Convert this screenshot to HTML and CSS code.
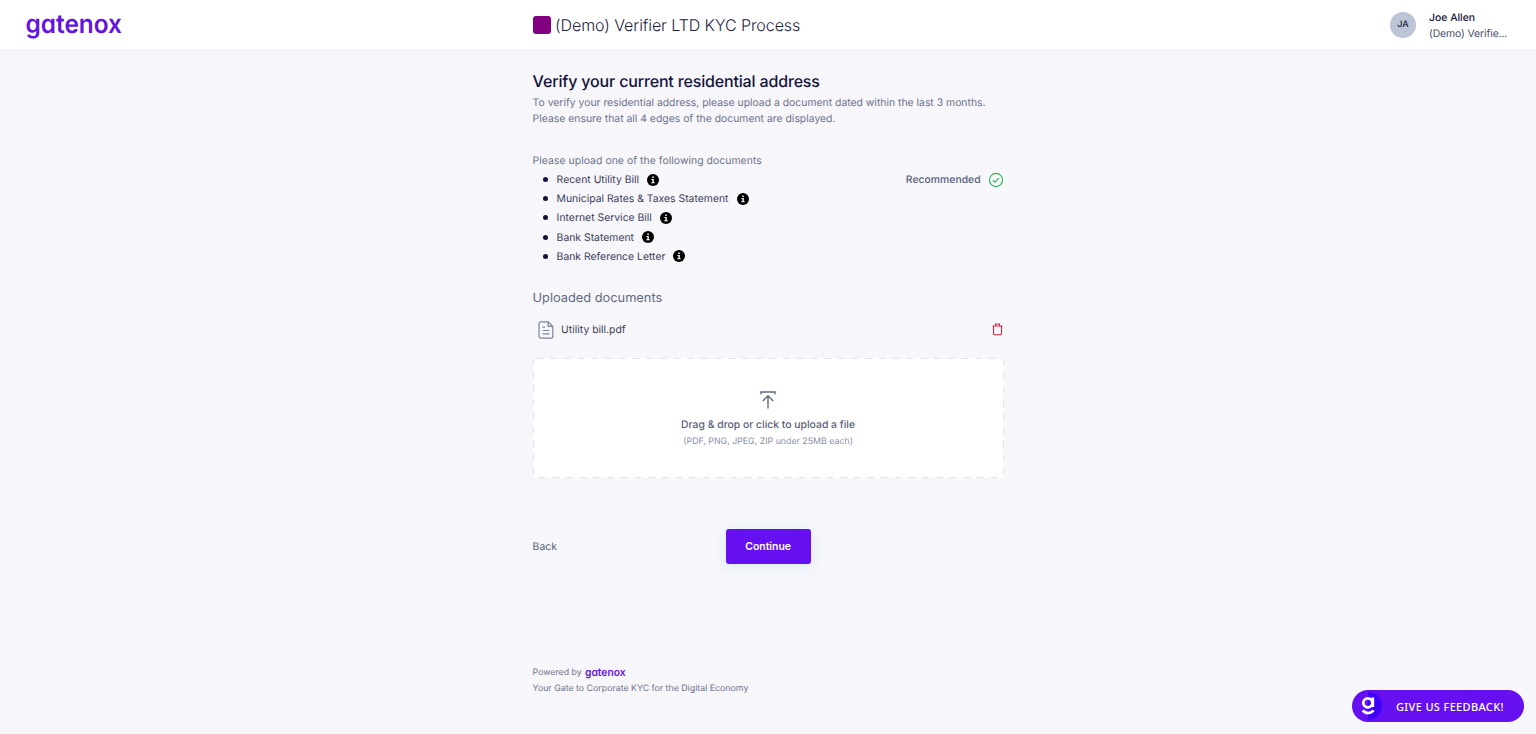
FILE: index.html
```html
<!DOCTYPE html>
<html lang="en">
<head>
<meta charset="utf-8">
<title>Verify your current residential address</title>
<link rel="stylesheet" href="styles.css">
</head>
<body>
<svg width="0" height="0" class="defs"><defs>
<symbol id="info" viewBox="0 0 12 12"><circle cx="6" cy="6" r="6" fill="#000"/><path d="M5.3 2.6h1.5v1.3H5.3zM4.5 5h2.3v3.3h.9v.9H4.3v-.9h1.1V5.9h-.9z" fill="#fff"/></symbol>
</defs></svg>
<header class="header">
  <div class="header-left"><svg class="logo" width="98" height="44" viewBox="0 0 98 44"><text class="wordmark" x=".5" y="29.500" font-size="26" textLength="96.500" lengthAdjust="spacingAndGlyphs">gatenox</text></svg></div>
  <div class="process"><span class="swatch"></span><span class="process-name">(Demo) Verifier LTD KYC Process</span></div>
  <div class="user"><span class="avatar">JA</span><div class="user-info"><div class="user-name">Joe Allen</div><div class="user-org">(Demo) Verifie...</div></div></div>
</header>
<main class="content">
  <h1 class="title">Verify your current residential address</h1>
  <p class="intro">To verify your residential address, please upload a document dated within the last 3 months.<br>Please ensure that all 4 edges of the document are displayed.</p>
  <p class="lead">Please upload one of the following documents</p>
  <ul class="docs">
    <li class="doc"><span>Recent Utility Bill</span><svg class="info"><use href="#info"/></svg>
      <span class="recommended">Recommended</span><svg class="check" width="16" height="16" viewBox="0 0 16 16"><circle cx="8" cy="8" r="6.6"/><path d="M5 8.2l2 1.9 4-4"/></svg></li>
    <li class="doc"><span>Municipal Rates &amp; Taxes Statement</span><svg class="info"><use href="#info"/></svg></li>
    <li class="doc"><span>Internet Service Bill</span><svg class="info"><use href="#info"/></svg></li>
    <li class="doc"><span>Bank Statement</span><svg class="info"><use href="#info"/></svg></li>
    <li class="doc"><span>Bank Reference Letter</span><svg class="info"><use href="#info"/></svg></li>
  </ul>
  <h2 class="subtitle">Uploaded documents</h2>
  <div class="file">
    <svg class="file-icon" width="16" height="18" viewBox="0 0 16 18"><path d="M3 .8h7.2l4.6 4.6v9.8a2 2 0 0 1-2 2H3a2 2 0 0 1-2-2V2.800a2 2 0 0 1 2-2zM10.200.8v4.600h4.600M4.500 6.200h2.500M4.500 9.500h7M4.500 12.800h7"/></svg>
    <span class="file-name">Utility bill.pdf</span>
    <svg class="trash" width="11" height="13" viewBox="0 0 11 13"><path d="M.5 3h10M3.500 2.800V1h4v1.800M1.500 3v7.800a1 1 0 0 0 1 1h6a1 1 0 0 0 1-1V3"/></svg>
  </div>
  <div class="drop">
    <svg class="border" width="471" height="120"><rect x=".5" y=".5" width="470" height="119" rx="3"/></svg>
    <svg class="upload" width="16" height="18" viewBox="0 0 16 18"><path d="M1 3.200V1h14v2.200M8 17.500V4.800M2.800 10L8 4.800l5.200 5.200"/></svg>
    <div class="drop-main">Drag &amp; drop or click to upload a file</div>
    <div class="drop-note">(PDF, PNG, JPEG, ZIP under 25MB each)</div>
  </div>
  <div class="actions"><a class="back">Back</a><button class="continue">Continue</button></div>
  <footer class="footer">
    <div class="powered"><span>Powered by</span><svg width="42" height="16" viewBox="0 0 42 16"><text class="wordmark" x="0" y="11" font-size="11" textLength="40.500" lengthAdjust="spacingAndGlyphs">gatenox</text></svg></div>
    <div class="tagline">Your Gate to Corporate KYC for the Digital Economy</div>
  </footer>
</main>
<button class="feedback"><svg width="32" height="32" viewBox="0 0 32 32"><circle cx="16" cy="16" r="14" fill="#3f00f5"/><path d="M16 2a14 14 0 0 0 0 28z" fill="#6610f2"/><g fill="none" stroke="#fff" stroke-width="2.700"><circle cx="15.800" cy="12.800" r="4.500"/><path d="M20.800 7.500v9.500M10.600 20.500q5.200 5.200 11 0"/></g></svg><span>GIVE US FEEDBACK!</span></button>
</body>
</html>
```
FILE: styles.css
```css
* { box-sizing: border-box; }
body { margin: 0; height: 734px; overflow: hidden; background: #f6f6fb; color: #4a4e69; font-family: Inter, "Liberation Sans", sans-serif; font-size: 10.4px; text-rendering: geometricPrecision; }
h1, h2, p, ul { margin: 0; padding: 0; font-weight: 400; }
button { border: 0; font-family: inherit; }
svg { display: block; flex: none; }
.defs { position: absolute; }
.header { height: 51px; padding: 0 28px 0 25px; display: grid; grid-template-columns: 507.500px 472px 1fr; align-items: center; background: #fff; border-bottom: 1px solid #ebebef; }
.logo { overflow: visible; }
.wordmark { fill: #6514e0; font-family: Inter, sans-serif; font-weight: 600; font-feature-settings: "cv11"; }
.process { display: flex; align-items: center; gap: 4.500px; }
.swatch { width: 18px; height: 18px; border-radius: 3px; background: #800080; }
.process-name { font-size: 16px; line-height: 24px; font-weight: 300; color: #24243f; letter-spacing: -.07px; white-space: nowrap; }
.user { display: flex; align-items: center; justify-content: flex-end; gap: 13px; padding-top: 1px; }
.avatar { width: 26px; height: 26px; margin-top: -1px; border-radius: 50%; background: #bdc4d6; color: #1c1c3c; font-size: 9px; font-weight: 500; line-height: 26px; text-align: center; }
.user-info { width: 79px; line-height: 16px; white-space: nowrap; }
.user-name { font-weight: 500; color: #14143a; }
.user-org { letter-spacing: -.1px; }
.content { width: 471px; margin: 0 0 0 532.600px; }
.title { padding-top: 18px; font-size: 16px; line-height: 24px; font-weight: 500; letter-spacing: -.16px; color: #12123a; white-space: nowrap; }
.intro { padding-top: 2px; line-height: 16px; color: #6c7489; white-space: nowrap; }
.lead { margin-top: 24px; line-height: 19px; letter-spacing: .05px; color: #6c7489; }
.docs { list-style: none; padding-left: 24px; }
.doc { display: flex; align-items: center; height: 19.200px; color: #3c4058; }
.doc::before { content: ""; width: 5px; height: 5px; margin: 0 9px 0 -14px; border-radius: 50%; background: #12123a; }
.info { width: 12px; height: 12px; margin-left: 8px; }
.recommended { margin-left: auto; color: #59617a; font-weight: 500; }
.check { margin-left: 7px; fill: none; stroke: #36b45c; stroke-width: 1.200; }
.subtitle { margin-top: 23px; font-size: 12.800px; line-height: 20px; color: #626a80; }
.file { display: flex; align-items: center; height: 18px; margin-top: 12px; padding: 0 1px 0 5px; color: #3c4058; }
.file-icon { fill: none; stroke: #7b849b; stroke-width: 1.200; }
.file-name { margin-left: 7.500px; }
.trash { margin-left: auto; fill: none; stroke: #c92b43; stroke-width: 1.100; }
.drop { position: relative; display: flex; flex-direction: column; align-items: center; width: 471px; height: 120px; margin-top: 19px; padding-top: 33px; border-radius: 3px; background: #fff; }
.border { position: absolute; inset: 0; fill: none; stroke: #e2e2e8; stroke-dasharray: 7 6.700; }
.upload { fill: none; stroke: #636b82; stroke-width: 1.400; }
.drop-main { margin-top: 8px; line-height: 16px; font-weight: 500; color: #59617a; }
.drop-note { margin-top: 1px; line-height: 16px; font-size: 8.800px; color: #8790a9; }
.actions { display: grid; grid-template-columns: 1fr 85px 1fr; align-items: center; margin-top: 51px; color: #59617a; }
.continue { height: 35px; padding: 0; border-radius: 3px; background: #6610f2; color: #fff; font-size: 10.400px; font-weight: 600; box-shadow: 0 2px 12px #dcebf5; }
.footer { margin-top: 101px; font-size: 8.800px; line-height: 15px; color: #6c7489; }
.powered { display: flex; align-items: center; gap: 3px; height: 16px; }
.tagline { white-space: nowrap; }
.feedback { position: fixed; right: 12px; bottom: 12px; display: flex; align-items: center; width: 172px; height: 32px; padding: 0; border-radius: 16px; background: #6610f2; color: #fff; font: 500 11px "Noto Sans", sans-serif; letter-spacing: .35px; }
.feedback span { margin-left: 12px; white-space: nowrap; }
```
